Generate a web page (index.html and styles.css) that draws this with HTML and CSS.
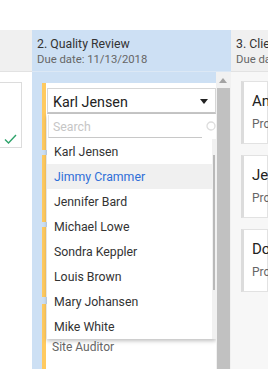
FILE: index.html
```html
<!DOCTYPE html>
<html lang="en">
<head>
    <meta charset="UTF-8">
    <meta name="viewport" content="width=device-width, initial-scale=1.0">
    <title>Board</title>
    <link rel="stylesheet" href="styles.css">
</head>
<body>
<div class="topbar"></div>
<div class="board">
    <div class="col col-done">
        <div class="col-head"></div>
        <div class="col-body">
            <div class="card-done">
                <svg class="check" width="13" height="10" viewBox="0 0 13 10"><path d="M1 5.5 L4.5 9 L12 1" fill="none" stroke="#2ea36b" stroke-width="1.4"/></svg>
            </div>
        </div>
    </div>
    <div class="col col-active">
        <div class="col-head">
            <div class="col-title">2. Quality Review</div>
            <div class="col-due">Due date: 11/13/2018</div>
        </div>
        <div class="col-body">
            <div class="lane">
                <div class="card c1"></div>
                <div class="card c2"></div>
                <div class="card c3"></div>
                <div class="card c4"><div class="card-role">Site Auditor</div></div>

                <div class="picker">
                    <div class="picker-select">
                        <span>Karl Jensen</span>
                        <i class="caret"></i>
                    </div>
                    <div class="picker-drop">
                        <div class="picker-search">
                            <div class="search-input">Search</div>
                            <svg class="search-icon" width="10" height="12" viewBox="0 0 10 12"><circle cx="5" cy="5" r="4" fill="none" stroke="#ddd" stroke-width="1.3"/></svg>
                        </div>
                        <ul class="picker-list">
                            <li>Karl Jensen</li>
                            <li class="hover">Jimmy Crammer</li>
                            <li>Jennifer Bard</li>
                            <li>Michael Lowe</li>
                            <li>Sondra Keppler</li>
                            <li>Louis Brown</li>
                            <li>Mary Johansen</li>
                            <li>Mike White</li>
                        </ul>
                        <div class="list-scroll"><b></b></div>
                    </div>
                </div>
            </div>
            <div class="vscroll">
                <i class="arrow-up"></i>
                <b class="thumb"></b>
            </div>
        </div>
    </div>
    <div class="col col-next">
        <div class="col-head">
            <div class="col-title">3. Client Review</div>
            <div class="col-due">Due date: 11/20/2018</div>
        </div>
        <div class="col-body">
            <div class="card-next">
                <div class="next-name">Ann Miller</div>
                <div class="next-role">Project Manager</div>
            </div>
            <div class="card-next">
                <div class="next-name">Jeff Stone</div>
                <div class="next-role">Project Manager</div>
            </div>
            <div class="card-next">
                <div class="next-name">Don Parker</div>
                <div class="next-role">Project Manager</div>
            </div>
        </div>
    </div>
</div>
</body>
</html>
```

FILE: styles.css
```css
html, body {
    margin: 0;
    padding: 0;
    background: #fff;
    font-family: Roboto, "Noto Sans", sans-serif;
    color: #333;
}
ul {
    margin: 0;
    padding: 0;
    list-style: none;
}
.topbar {
    height: 30px;
}
.board {
    display: flex;
    height: 339px;
    overflow: hidden;
}
.col {
    flex: none;
    display: flex;
    flex-direction: column;
    overflow: hidden;
}
.col-head {
    flex: none;
    height: 42px;
    box-sizing: border-box;
    padding: 6px 0 0 5px;
    background: #f0f0f0;
    border-bottom: 1px solid #e2e2e2;
    white-space: nowrap;
}
.col-title {
    font-size: 12.3px;
    line-height: 16px;
    color: #333;
}
.col-due {
    font-size: 11.3px;
    line-height: 15px;
    color: #666;
}
.col-body {
    flex: 1;
    position: relative;
    min-height: 0;
}

/* column 1 */
.col-done {
    width: 32px;
}
.col-done .col-body {
    background: #fff;
}
.card-done {
    margin: 10px 0 0 -20px;
    width: 40px;
    height: 64px;
    border: 1px solid #dcdcdc;
    position: relative;
}
.check {
    position: absolute;
    right: 4px;
    bottom: 3px;
}

/* column 2 */
.col-active {
    width: 199px;
}
.col-active .col-head {
    background: #cde0f4;
    border-bottom-color: #dce8f5;
}
.col-active .col-body {
    background: #cde0f4;
    display: flex;
}
.lane {
    flex: 1;
    position: relative;
    overflow: hidden;
    padding: 11px 0 0 10px;
}
.card {
    height: 67px;
    margin-bottom: 5px;
    background: #fff;
    border-left: 4px solid #ffca60;
}
.c3 {
    height: 70px;
    margin-bottom: 7px;
}
.c4 {
    height: 90px;
    position: relative;
}
.card-role {
    position: absolute;
    left: 6px;
    top: 36px;
    font-size: 12px;
    color: #666;
}
.vscroll {
    flex: none;
    width: 15px;
    background: #f1f1f1;
    position: relative;
}
.arrow-up {
    position: absolute;
    left: 3px;
    top: 6px;
    border: 4px solid transparent;
    border-top: 0;
    border-bottom: 5px solid #a3a3a3;
}
.thumb {
    position: absolute;
    left: 1px;
    right: 1px;
    top: 16px;
    bottom: 0;
    background: #c1c1c1;
}

/* person picker */
.picker {
    position: absolute;
    left: 15px;
    top: 16px;
    width: 169px;
}
.picker-select {
    height: 26px;
    box-sizing: border-box;
    border: 1px solid #d6d6d6;
    border-bottom: 2px solid #c8c8c8;
    background: #fff;
    padding: 2px 0 0 5px;
    display: flex;
    align-items: center;
    font-size: 14.3px;
    color: #222;
}
.picker-select span {
    flex: 1;
}
.caret {
    margin-right: 7px;
    border: 4px solid transparent;
    border-bottom: 0;
    border-top: 5px solid #222;
}
.picker-drop {
    position: relative;
    background: #fff;
    box-shadow: 0 2px 4px rgba(0, 0, 0, .25);
}
.picker-search {
    height: 25px;
    box-sizing: border-box;
    padding: 1px 0 0 1px;
    display: flex;
    align-items: flex-start;
    overflow: hidden;
}
.search-input {
    width: 158px;
    height: 23px;
    box-sizing: border-box;
    border-left: 1px solid #e6e6e6;
    border-bottom: 1px solid #c8c8c8;
    padding: 5px 0 0 4px;
    font-size: 12.3px;
    color: #c6c6c6;
}
.search-icon {
    margin: 6px 0 0 4px;
    flex: none;
}
.picker-list li {
    height: 25px;
    line-height: 27px;
    padding-left: 7px;
    margin-right: 4px;
    font-size: 12.3px;
    color: #333;
}
.picker-list .hover {
    background: #f0f0f0;
    color: #2f6fd8;
}
.list-scroll {
    position: absolute;
    right: 0;
    top: 25px;
    bottom: 0;
    width: 4px;
    background: #f1f1f1;
}
.list-scroll b {
    position: absolute;
    left: 1px;
    top: 16px;
    width: 2px;
    height: 135px;
    background: #b9b9b9;
}

/* column 3 */
.col-next {
    flex: 1;
}
.col-next .col-body {
    background: #f7f7f7;
    padding: 9px 0 0 10px;
}
.card-next {
    height: 63px;
    margin-bottom: 11px;
    box-sizing: border-box;
    background: #fff;
    border: 1px solid #e2e2e2;
    border-left: 3px solid #dcdcdc;
    padding: 9px 0 0 8px;
    white-space: nowrap;
}
.next-name {
    font-size: 15px;
    line-height: 20px;
    color: #222;
}
.next-role {
    margin-top: 6px;
    font-size: 12px;
    color: #666;
}
```
